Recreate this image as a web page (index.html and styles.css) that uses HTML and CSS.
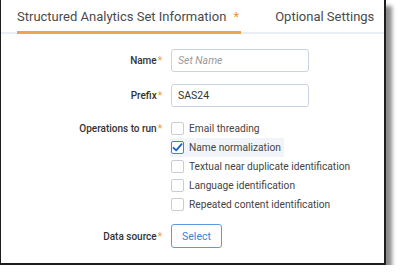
FILE: index.html
```html
<!DOCTYPE html>
<html lang="en">
<head>
    <meta charset="UTF-8">
    <title>Structured Analytics Set</title>
    <link rel="stylesheet" href="styles.css">
</head>
<body>
    <div class="frame">
        <div class="tabs">
            <div class="tab active">Structured Analytics Set Information <span class="req">*</span></div>
            <div class="tab">Optional Settings</div>
        </div>

        <div class="form">
            <div class="label">Name<span class="req">*</span></div>
            <div class="field"><input class="text-input" type="text" placeholder="Set Name"></div>

            <div class="label">Prefix<span class="req">*</span></div>
            <div class="field"><input class="text-input" type="text" value="SAS24"></div>

            <div class="label label-top">Operations to run<span class="req">*</span></div>
            <div class="checks">
                <div class="check-row"><span class="box"></span>Email threading</div>
                <div class="check-row selected">
                    <span class="box checked">
                        <svg width="13" height="13" viewBox="0 0 13 13"><path d="M2.5 6.8 L5.2 9.4 L10.6 3.2" fill="none" stroke="#1a5fc9" stroke-width="1.8" stroke-linecap="round" stroke-linejoin="round"/></svg>
                    </span>Name normalization
                </div>
                <div class="check-row"><span class="box"></span>Textual near duplicate identification</div>
                <div class="check-row"><span class="box"></span>Language identification</div>
                <div class="check-row"><span class="box"></span>Repeated content identification</div>
            </div>

            <div class="label">Data source<span class="req">*</span></div>
            <div class="field"><button class="select-btn">Select</button></div>
        </div>
    </div>
</body>
</html>
```

FILE: styles.css
```css
body {
    margin: 0;
    background: #ffffff;
    font-family: Roboto, "Liberation Sans", sans-serif;
}

/* outer screenshot frame */
.frame {
    width: 383px;
    height: 263px;
    background: #ffffff;
    border: 2px solid #1c1c1c;
    border-top: none;
    border-left-width: 1px;
    box-shadow: 6px 6px 4px rgba(0, 0, 0, 0.45);
}

/* tab strip */
.tabs {
    display: flex;
    gap: 34px;
    padding-left: 16px;
    border-bottom: 2px solid #eaeff5;
    height: 32px;
    white-space: nowrap;
}

.tab {
    font-size: 13px;
    color: #4a4a4a;
    padding-top: 9px;
    box-sizing: border-box;
    height: 34px;
    flex-shrink: 0;
}

.tab.active {
    border-bottom: 3px solid #f0a54a;
    padding-right: 2px;
}

.tab .req {
    margin-left: 4px;
}

.req {
    color: #f0962e;
    font-weight: 400;
}

/* form grid */
.form {
    display: grid;
    grid-template-columns: 161px 1fr;
    column-gap: 9px;
    row-gap: 12px;
    padding-top: 15px;
    align-items: center;
}

.label {
    text-align: right;
    font-size: 10px;
    font-weight: 500;
    color: #333333;
}

.label .req {
    margin-left: 1px;
}

.label-top {
    align-self: start;
    padding-top: 4px;
}

.text-input {
    width: 138px;
    height: 23px;
    box-sizing: border-box;
    border: 1px solid #c9d3e0;
    border-radius: 3px;
    padding: 0 6px;
    font-family: Roboto, "Liberation Sans", sans-serif;
    font-size: 10.5px;
    color: #333333;
    display: block;
}

.text-input::placeholder {
    font-style: italic;
    color: #9a9a9a;
}

/* checkbox list */
.checks {
    display: flex;
    flex-direction: column;
    gap: 2px;
    margin-top: 1px;
}

.check-row {
    display: flex;
    align-items: center;
    gap: 5px;
    font-size: 10.2px;
    color: #444444;
    height: 17px;
    width: max-content;
    padding-right: 3px;
}

.check-row.selected {
    background: #f1f5fa;
    margin-left: -1px;
    padding-left: 1px;
    height: 19px;
    margin-top: -1px;
    margin-bottom: -1px;
}

.box {
    width: 13px;
    height: 13px;
    box-sizing: border-box;
    border: 1px solid #c5cdd8;
    border-radius: 2px;
    background: #ffffff;
    display: inline-block;
    flex-shrink: 0;
}

.box.checked {
    border-color: #4d7fd0;
    position: relative;
}

.box.checked svg {
    position: absolute;
    left: -1px;
    top: -1px;
}

.select-btn {
    width: 51px;
    height: 24px;
    border: 1px solid #5d9be0;
    border-radius: 3px;
    background: #ffffff;
    color: #3d7fd6;
    font-family: Roboto, "Liberation Sans", sans-serif;
    font-size: 10.5px;
    display: block;
    margin-top: -1px;
}
```
